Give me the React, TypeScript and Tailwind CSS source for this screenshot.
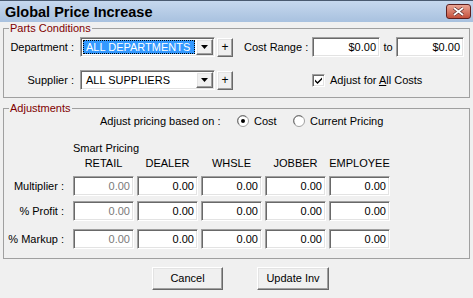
import React from "react";

// classic win32 3D borders
const sunken =
  "border border-t-[#a0a0a0] border-l-[#a0a0a0] border-r-white border-b-white shadow-[inset_1px_1px_0_#696969,inset_-1px_-1px_0_#e3e3e3]";
const raised =
  "border border-t-white border-l-white border-r-[#696969] border-b-[#696969] shadow-[inset_-1px_-1px_0_#a0a0a0,inset_1px_1px_0_#e3e3e3] bg-[#f0f0f0]";

const columns = ["RETAIL", "DEALER", "WHSLE", "JOBBER", "EMPLOYEE"];
const rows = ["Multiplier :", "% Profit :", "% Markup :"];

const Arrow = () => (
  <svg width="7" height="4" viewBox="0 0 7 4">
    <path d="M0 0h7L3.5 4z" fill="#000" />
  </svg>
);

const Combo = ({ value, focused }: { value: string; focused?: boolean }) => (
  <div className={`flex h-[20px] w-[135px] bg-white p-[1px] ${sunken}`}>
    <div className="flex flex-1 p-[1px]">
      <div
        className={`flex flex-1 items-center pl-[2px] ${
          focused ? "border border-dotted border-black bg-[#3399ff] text-white" : "border border-transparent"
        }`}
      >
        {value}
      </div>
    </div>
    <div className={`flex w-[17px] items-center justify-center ${raised}`}>
      <Arrow />
    </div>
  </div>
);

const PlusBtn = () => (
  <div className={`ml-[2px] flex h-[19px] w-[16px] items-center justify-center text-[12px] ${raised}`}>+</div>
);

const Field = ({ value, disabled, w = "w-[61px]" }: { value: string; disabled?: boolean; w?: string }) => (
  <div
    className={`flex h-[20px] ${w} items-center justify-end bg-white pr-[3px] ${sunken} ${
      disabled ? "text-[#7a7a7a]" : "text-black"
    }`}
  >
    {value}
  </div>
);

const Radio = ({ checked }: { checked?: boolean }) => (
  <svg width="12" height="12" viewBox="0 0 12 12">
    <circle cx="6" cy="6" r="5.5" fill="#fff" stroke="#a0a0a0" />
    <path d="M2.2 9.3A4.6 4.6 0 0 1 9.3 2.2" fill="none" stroke="#696969" />
    {checked && <circle cx="6" cy="6" r="2" fill="#000" />}
  </svg>
);

const Check = () => (
  <div className={`flex h-[13px] w-[13px] items-center justify-center bg-white ${sunken}`}>
    <svg width="7" height="7" viewBox="0 0 7 7">
      <path d="M0 2.5l2.5 2.5L7 0.5V2.5L2.5 7L0 4.5z" fill="#000" />
    </svg>
  </div>
);

const GlobalPriceIncrease = () => {
  return (
    <div
      className="h-[298px] w-[473px] overflow-hidden bg-[#f0f0f0] text-[11px] leading-[13px] text-black"
      style={{ fontFamily: '"Liberation Sans", Arial, sans-serif' }}
    >
      {/* Title bar */}
      <div className="flex h-[22px] items-center justify-between border-t border-[#4a5a70] bg-gradient-to-b from-[#c6d8ee] to-[#a8c1df] pl-[5px] pr-[2px]">
        <span className="text-[14.5px] font-bold leading-[16px]">Global Price Increase</span>
        <div className="flex h-[15px] w-[25px] items-center justify-center rounded-[3px] border border-[#5e1f1f] bg-gradient-to-b from-[#e9a595] to-[#c4503c]">
          <svg width="11" height="9" viewBox="0 0 11 9">
            <path d="M1 1l9 7M10 1L1 8" stroke="#5a2a2a" strokeWidth="3.2" />
            <path d="M1 1l9 7M10 1L1 8" stroke="#fff" strokeWidth="1.8" />
          </svg>
        </div>
      </div>

      <div className="px-[3px]">
        {/* Parts Conditions */}
        <fieldset className="w-[467px] border border-[#a0a0a0] pb-[7px]">
          <legend className="ml-[5px] px-[1px] leading-[12px] text-[#800000]">Parts Conditions</legend>
          <div className="mt-[3px] flex h-[20px] items-center">
            <span className="w-[70px] text-right">Department :</span>
            <div className="ml-[6px] flex items-center">
              <Combo value="ALL DEPARTMENTS" focused />
              <PlusBtn />
            </div>
            <span className="ml-[11px] w-[68px]">Cost Range :</span>
            <Field value="$0.00" w="w-[68px]" />
            <span className="w-[16px] text-center">to</span>
            <Field value="$0.00" w="w-[68px]" />
          </div>
          <div className="mt-[13px] flex h-[20px] items-center">
            <span className="w-[70px] text-right">Supplier :</span>
            <div className="ml-[6px] flex items-center">
              <Combo value="ALL SUPPLIERS" />
              <PlusBtn />
            </div>
            <div className="ml-[79px] flex items-center">
              <Check />
              <span className="ml-[5px]">
                Adjust for <span className="underline">A</span>ll Costs
              </span>
            </div>
          </div>
        </fieldset>

        {/* Adjustments */}
        <fieldset className="mt-[4px] w-[467px] border border-[#a0a0a0] pb-[9px]">
          <legend className="ml-[5px] px-[1px] leading-[12px] text-[#800000]">Adjustments</legend>
          <div className="flex h-[14px] items-center">
            <span className="ml-[96px] w-[137px] whitespace-nowrap">Adjust pricing based on :</span>
            <div className="flex w-[56px] items-center">
              <Radio checked />
              <span className="ml-[5px]">Cost</span>
            </div>
            <div className="flex items-center">
              <Radio />
              <span className="ml-[5px]">Current Pricing</span>
            </div>
          </div>

          <div className="ml-[69px] mt-[14px] flex">
            <span className="w-[61px] whitespace-nowrap text-center">Smart Pricing</span>
          </div>
          <div className="ml-[69px] mt-[2px] flex gap-[3px]">
            {columns.map((c) => (
              <span key={c} className="w-[61px] text-center">
                {c}
              </span>
            ))}
          </div>

          <div className="mt-[6px] flex flex-col gap-[5px]">
            {rows.map((r, i) => (
              <div key={r} className={`flex items-center ${i === 2 ? "mt-[3px]" : ""}`}>
                <span className="w-[60px] text-right">{r}</span>
                <div className="ml-[9px] flex gap-[3px]">
                  {columns.map((c, j) => (
                    <Field key={c} value="0.00" disabled={j === 0} />
                  ))}
                </div>
              </div>
            ))}
          </div>
        </fieldset>

        {/* Buttons */}
        <div className="mt-[8px] flex gap-[34px] pl-[149px]">
          <button className={`h-[23px] w-[71px] text-[11px] ${raised}`}>Cancel</button>
          <button className={`h-[23px] w-[72px] text-[11px] ${raised}`}>Update Inv</button>
        </div>
      </div>
    </div>
  );
};

const App = () => {
  return <GlobalPriceIncrease />;
};

export default App;
